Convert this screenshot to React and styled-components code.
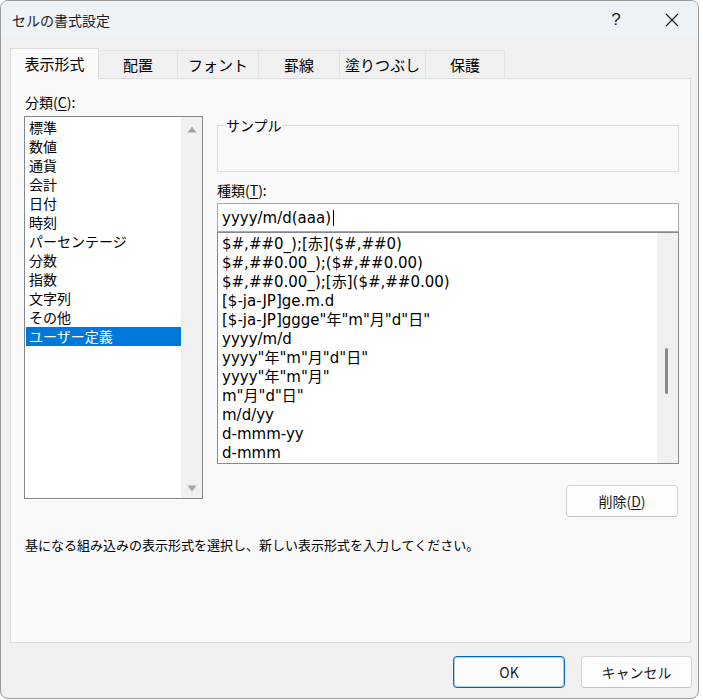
import React from 'react'
import styled, { createGlobalStyle } from 'styled-components'

const GlobalStyle = createGlobalStyle`
  html, body {
    margin: 0;
    padding: 0;
    background: #ffffff;
  }
  body {
    font-family: "Noto Sans CJK JP", "Noto Sans", sans-serif;
    color: #000;
  }
`

const tabs = [
  { label: '表示形式', width: 89, active: true },
  { label: '配置', width: 80 },
  { label: 'フォント', width: 82 },
  { label: '罫線', width: 82 },
  { label: '塗りつぶし', width: 87 },
  { label: '保護', width: 80 },
]

const categories = [
  '標準', '数値', '通貨', '会計', '日付', '時刻', 'パーセンテージ',
  '分数', '指数', '文字列', 'その他', 'ユーザー定義',
]

const formats = [
  '$#,##0_);[赤]($#,##0)',
  '$#,##0.00_);($#,##0.00)',
  '$#,##0.00_);[赤]($#,##0.00)',
  '[$-ja-JP]ge.m.d',
  '[$-ja-JP]ggge"年"m"月"d"日"',
  'yyyy/m/d',
  'yyyy"年"m"月"d"日"',
  'yyyy"年"m"月"',
  'm"月"d"日"',
  'm/d/yy',
  'd-mmm-yy',
  'd-mmm',
]

const Arrow = ({ down }) => (
  <svg width="10" height="7" viewBox="0 0 10 7">
    <polygon points={down ? '0.5,0.5 9.5,0.5 5,6.5' : '0.5,6.5 9.5,6.5 5,0.5'} fill="#a3a3a3" />
  </svg>
)

const CloseIcon = () => (
  <svg width="14" height="14" viewBox="0 0 14 14">
    <path d="M1 1 L13 13 M13 1 L1 13" stroke="#1b1b1b" strokeWidth="1.1" fill="none" />
  </svg>
)

const App = () => {
  return (
    <>
      <GlobalStyle />
      <Window>
        <TitleBar>
          <Title>セルの書式設定</Title>
          <TitleButton $w={60}>?</TitleButton>
          <TitleButton $w={52}><CloseIcon /></TitleButton>
        </TitleBar>

        <TabRow>
          {tabs.map((t) => (
            <Tab key={t.label} $w={t.width} $active={t.active}>{t.label}</Tab>
          ))}
        </TabRow>

        <Panel>
          <Columns>
            <LeftCol>
              <FieldLabel>分類(<u>C</u>):</FieldLabel>
              <CategoryBox>
                <CategoryItems>
                  {categories.map((c) => (
                    <CategoryItem key={c} $selected={c === 'ユーザー定義'}>{c}</CategoryItem>
                  ))}
                </CategoryItems>
                <ArrowTrack>
                  <Arrow />
                  <Arrow down />
                </ArrowTrack>
              </CategoryBox>
            </LeftCol>

            <RightCol>
              <SampleGroup>
                <legend>サンプル</legend>
              </SampleGroup>
              <TypeLabel>種類(<u>T</u>):</TypeLabel>
              <FormatInput>
                yyyy/m/d(aaa)<Caret />
              </FormatInput>
              <FormatBox>
                <FormatItems>
                  {formats.map((f) => (
                    <FormatItem key={f}>{f}</FormatItem>
                  ))}
                </FormatItems>
                <ScrollTrack>
                  <Thumb />
                </ScrollTrack>
              </FormatBox>
              <DeleteButton>削除(<u>D</u>)</DeleteButton>
            </RightCol>
          </Columns>
          <Hint>基になる組み込みの表示形式を選択し、新しい表示形式を入力してください。</Hint>
        </Panel>

        <Footer>
          <DialogButton $primary $w={112}>OK</DialogButton>
          <DialogButton $w={111}>キャンセル</DialogButton>
        </Footer>
      </Window>
    </>
  )
}

export default App

const Window = styled.div`
  width: 699px;
  height: 699px;
  box-sizing: border-box;
  border: 1px solid #9a9a9a;
  border-radius: 8px;
  background: #f0f0f0;
  display: flex;
  flex-direction: column;
  overflow: hidden;
`

const TitleBar = styled.div`
  height: 36px;
  flex-shrink: 0;
  background: #eef3f8;
  display: flex;
  align-items: center;
  padding-left: 11px;
  padding-top: 2px;
  box-sizing: border-box;
`

const Title = styled.div`
  flex: 1;
  font-size: 14px;
  color: #1b1b1b;
`

const TitleButton = styled.div`
  width: ${(p) => p.$w}px;
  height: 34px;
  display: flex;
  align-items: center;
  justify-content: center;
  font-family: "Liberation Sans", sans-serif;
  font-size: 17px;
  color: #1b1b1b;
`

const TabRow = styled.div`
  height: 41px;
  flex-shrink: 0;
  display: flex;
  align-items: flex-end;
  padding-left: 9px;
`

const Tab = styled.div`
  width: ${(p) => p.$w}px;
  height: ${(p) => (p.$active ? 31 : 28)}px;
  margin-bottom: ${(p) => (p.$active ? -1 : 0)}px;
  margin-left: -1px;
  &:first-child { margin-left: 0; }
  box-sizing: border-box;
  border: 1px solid ${(p) => (p.$active ? '#dcdcdc' : '#e2e2e2')};
  border-bottom: none;
  background: ${(p) => (p.$active ? '#f9f9f9' : '#f0f0f0')};
  position: relative;
  z-index: ${(p) => (p.$active ? 1 : 0)};
  display: flex;
  align-items: center;
  justify-content: center;
  padding-bottom: ${(p) => (p.$active ? 2 : 0)}px;
  font-size: 15px;
`

const Panel = styled.div`
  width: 681px;
  height: 565px;
  flex-shrink: 0;
  margin-left: 9px;
  box-sizing: border-box;
  background: #f9f9f9;
  border: 1px solid #dcdcdc;
  padding: 14px 11px 0 13px;
  display: flex;
  flex-direction: column;
`

const Columns = styled.div`
  display: flex;
  gap: 14px;
  align-items: flex-start;
`

const LeftCol = styled.div`
  width: 179px;
  display: flex;
  flex-direction: column;
`

const FieldLabel = styled.div`
  font-size: 14px;
  line-height: 19px;
  height: 19px;
  margin-bottom: 4px;
  padding-left: 1px;
  u { text-underline-offset: 2px; }
`

const CategoryBox = styled.div`
  height: 383px;
  box-sizing: border-box;
  border: 1px solid #82878f;
  background: #ffffff;
  display: flex;
`

const CategoryItems = styled.div`
  flex: 1;
  padding: 1px 0 0 1px;
`

const CategoryItem = styled.div`
  height: 19px;
  line-height: 19px;
  padding-left: 3px;
  font-size: 14px;
  white-space: nowrap;
  background: ${(p) => (p.$selected ? '#0078d7' : 'transparent')};
  color: ${(p) => (p.$selected ? '#ffffff' : '#000000')};
`

const ArrowTrack = styled.div`
  width: 21px;
  background: #f0f0f0;
  display: flex;
  flex-direction: column;
  justify-content: space-between;
  align-items: center;
  padding: 9px 0 6px;
  box-sizing: border-box;
`

const RightCol = styled.div`
  flex: 1;
  display: flex;
  flex-direction: column;
`

const SampleGroup = styled.fieldset`
  margin: 24px 0 0;
  height: 55px;
  box-sizing: border-box;
  border: 1px solid #dcdcdc;
  padding: 0 7px;
  min-width: 0;

  legend {
    padding: 0 1px;
    font-size: 14px;
    line-height: 16px;
  }
`

const TypeLabel = styled(FieldLabel)`
  margin-top: 9px;
  margin-bottom: 3px;
  padding-left: 0;
`

const FormatInput = styled.div`
  height: 29px;
  box-sizing: border-box;
  border: 1px solid #a8a8a8;
  background: #ffffff;
  padding-left: 4px;
  display: flex;
  align-items: center;
  font-family: "DejaVu Sans", "Noto Sans CJK JP", sans-serif;
  font-size: 15px;
`

const Caret = styled.span`
  width: 1px;
  height: 16px;
  margin-left: 2px;
  background: #000000;
`

const FormatBox = styled.div`
  height: 232px;
  box-sizing: border-box;
  border: 1px solid #868a90;
  background: #ffffff;
  display: flex;
`

const FormatItems = styled.div`
  flex: 1;
  padding-top: 2px;
  overflow: hidden;
`

const FormatItem = styled.div`
  height: 19px;
  line-height: 19px;
  padding-left: 4px;
  white-space: nowrap;
  font-family: "DejaVu Sans", "Noto Sans CJK JP", sans-serif;
  font-size: 15px;
`

const ScrollTrack = styled.div`
  width: 21px;
  background: #f0f0f0;
  display: flex;
  flex-direction: column;
  align-items: center;
`

const Thumb = styled.div`
  width: 3px;
  height: 46px;
  margin-top: 115px;
  margin-left: -2px;
  border-radius: 2px;
  background: #8a8a8a;
`

const ButtonBase = styled.button`
  height: 32px;
  box-sizing: border-box;
  border: 1px solid #d3d3d3;
  border-bottom-color: #c4c4c4;
  border-radius: 4px;
  background: #fdfdfd;
  font-family: "Noto Sans CJK JP", sans-serif;
  font-size: 14px;
  color: #1b1b1b;
  padding: 0;
  u { text-underline-offset: 2px; }
`

const DeleteButton = styled(ButtonBase)`
  align-self: flex-end;
  width: 112px;
  margin-top: 21px;
  margin-right: 1px;
`

const Hint = styled.div`
  margin-top: 18px;
  padding-left: 1px;
  font-size: 13px;
  line-height: 19px;
`

const Footer = styled.div`
  display: flex;
  justify-content: flex-end;
  gap: 16px;
  padding: 13px 6px 0 0;
`

const DialogButton = styled(ButtonBase)`
  width: ${(p) => p.$w}px;
  ${(p) => p.$primary && `
    border: 1px solid #0067c0;
    box-shadow: inset 0 0 0 1px rgba(0, 103, 192, 0.3);
  `}
`
